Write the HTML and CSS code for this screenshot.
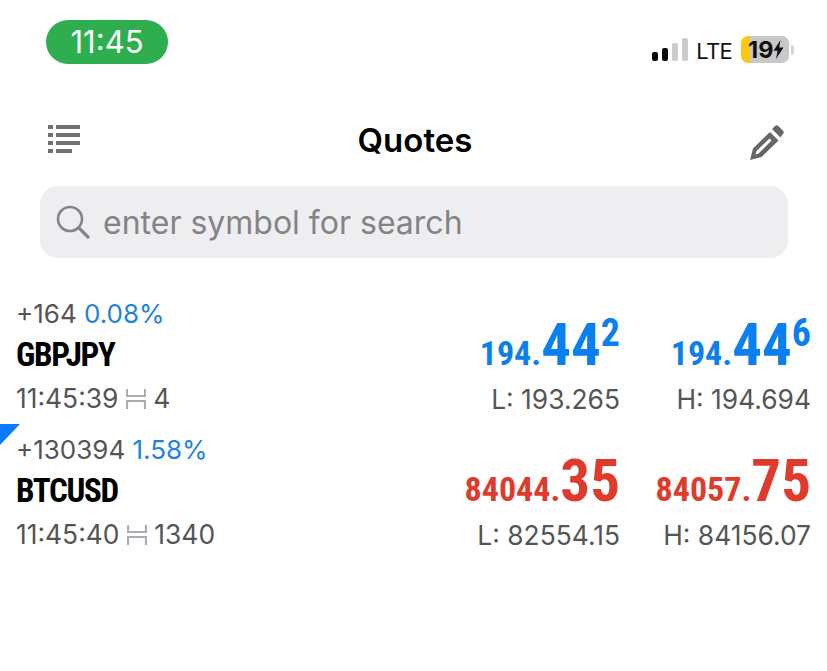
FILE: index.html
```html
<!DOCTYPE html>
<html lang="en">
<head>
  <meta charset="UTF-8" />
  <title>Quotes</title>
  <link rel="stylesheet" href="styles.css">
</head>
<body>
  <div class="status-bar">
    <div class="clock-pill">11:45</div>
    <div class="status-right">
      <div class="signal">
        <span class="bar bar-1"></span>
        <span class="bar bar-2"></span>
        <span class="bar bar-3"></span>
        <span class="bar bar-4"></span>
      </div>
      <span class="network">LTE</span>
      <div class="battery">
        <span class="battery-level">19</span>
        <svg class="bolt" width="11" height="19" viewBox="0 0 11 19"><path d="M7.5 0 0.5 10.8H4.6L3 19 10.5 7.6H6.2Z" fill="#111"/></svg>
      </div>
      <span class="battery-nub"></span>
    </div>
  </div>

  <div class="nav-bar">
    <svg class="list-icon" width="33" height="30" viewBox="0 0 33 30" fill="#707070">
      <rect x="0" y="0" width="5" height="4"/><rect x="8" y="0" width="24" height="4"/>
      <rect x="0" y="8" width="5" height="4"/><rect x="8" y="8" width="24" height="4"/>
      <rect x="0" y="16" width="5" height="4"/><rect x="8" y="16" width="24" height="4"/>
      <rect x="0" y="24" width="5" height="4"/><rect x="8" y="24" width="16" height="4"/>
    </svg>
    <div class="nav-title">Quotes</div>
    <svg class="edit-icon" width="35" height="36" viewBox="0 0 35 36" fill="#666">
      <path d="M1 35 4 23.5 21 7 29.5 15.5 12.5 32ZM7.5 26 20.5 13.5 22.5 15.5 9.5 28.5 6.5 29.5Z" fill-rule="evenodd"/>
      <path d="M23 4 25.8 1.2A2.6 2.6 0 0 1 29.5 1.2L33.8 5.4A2.6 2.6 0 0 1 33.8 9.2L31.5 12.5Z"/>
    </svg>
  </div>

  <div class="search-box">
    <svg class="search-icon" width="34" height="34" viewBox="0 0 34 34" fill="none" stroke="#858589" stroke-width="2.6">
      <circle cx="14" cy="14" r="12"/>
      <path d="M22.6 22.6 32 32" stroke-linecap="round" stroke-width="3.2"/>
    </svg>
    <span class="search-text">enter symbol for search</span>
  </div>

  <div class="quotes">
    <div class="quote-row">
      <div class="quote-info">
        <div class="change">+164 <span class="percent">0.08%</span></div>
        <div class="symbol">GBPJPY</div>
        <div class="time">11:45:39
          <svg class="spread-icon" width="20" height="20" viewBox="0 0 20 20" fill="none" stroke="#a8aeb4" stroke-width="2.2"><path d="M1 0V7H19V0M1 20V12H19V20"/></svg>
          4</div>
      </div>
      <div class="price-cell up">
        <div class="price"><span class="small">194.</span><span class="big">44</span><span class="sup">2</span></div>
        <div class="limit">L: 193.265</div>
      </div>
      <div class="price-cell up">
        <div class="price"><span class="small">194.</span><span class="big">44</span><span class="sup">6</span></div>
        <div class="limit">H: 194.694</div>
      </div>
    </div>
    <div class="quote-row">
      <span class="corner"></span>
      <div class="quote-info">
        <div class="change">+130394 <span class="percent">1.58%</span></div>
        <div class="symbol">BTCUSD</div>
        <div class="time">11:45:40
          <svg class="spread-icon" width="20" height="20" viewBox="0 0 20 20" fill="none" stroke="#a8aeb4" stroke-width="2.2"><path d="M1 0V7H19V0M1 20V12H19V20"/></svg>
          1340</div>
      </div>
      <div class="price-cell down">
        <div class="price"><span class="small">84044.</span><span class="big">35</span></div>
        <div class="limit">L: 82554.15</div>
      </div>
      <div class="price-cell down">
        <div class="price"><span class="small">84057.</span><span class="big">75</span></div>
        <div class="limit">H: 84156.07</div>
      </div>
    </div>
  </div>
</body>
</html>
```

FILE: styles.css
```css
* {
  box-sizing: border-box;
  margin: 0;
  padding: 0;
}

body {
  background: white;
  font-family: Inter, 'Noto Sans', sans-serif;
  color: #555;
}

/* Status bar */
.status-bar {
  display: flex;
  justify-content: space-between;
  align-items: flex-start;
  height: 122px;
  padding: 20px 33px 0 46px;
}

.clock-pill {
  width: 122px;
  height: 44px;
  border-radius: 22px;
  background: #2fae50;
  color: white;
  font-size: 31px;
  line-height: 44px;
  text-align: center;
}

.status-right {
  display: flex;
  align-items: center;
  margin-top: 16px;
  height: 27px;
}

.signal {
  display: flex;
  align-items: flex-end;
  gap: 3.5px;
  height: 23px;
  margin-top: -1px;
}

.bar {
  width: 6.5px;
  border-radius: 2px;
  background: #cbcbcb;
}

.bar-1 { height: 9px; background: #0a0a0a; }
.bar-2 { height: 13px; background: #0a0a0a; }
.bar-3 { height: 18px; }
.bar-4 { height: 23px; }

.network {
  margin: 3px 0 0 8px;
  font-size: 22px;
  letter-spacing: -0.7px;
  color: #111;
}

.battery {
  display: flex;
  align-items: center;
  width: 48px;
  height: 27px;
  margin-left: 9px;
  padding-left: 7px;
  border-radius: 7px;
  background: linear-gradient(to right, #fbc913 9px, #c8c8c8 9px);
}

.battery-level {
  font-size: 23.5px;
  font-weight: 700;
  color: #111;
}

.battery-nub {
  width: 3px;
  height: 10px;
  margin-left: 2px;
  border-radius: 0 3px 3px 0;
  background: #d4d4d4;
}

/* Nav bar */
.nav-bar {
  display: flex;
  justify-content: space-between;
  align-items: flex-start;
  height: 64px;
  padding: 3px 43px 0 48px;
}

.nav-title {
  margin-top: -4px;
  font-size: 33px;
  font-weight: 600;
  color: black;
  line-height: 38px;
}

/* Search */
.search-box {
  display: flex;
  align-items: center;
  gap: 13px;
  height: 72px;
  margin: 0 39px 0 40px;
  padding: 0 0 0 16px;
  border-radius: 18px;
  background: #eeeef0;
}

.search-text {
  font-size: 32px;
  color: #838388;
}

/* Quote rows */
.quotes {
  margin-top: 35px;
}

.quote-row {
  position: relative;
  display: grid;
  grid-template-columns: 1fr 192px 191px;
  height: 136px;
  padding: 0 16px;
}

.corner {
  position: absolute;
  left: 0;
  top: -5px;
  width: 0;
  height: 0;
  border-top: 21px solid #0a7aff;
  border-right: 20px solid transparent;
}

.change {
  font-size: 26px;
  line-height: 42px;
}

.time,
.limit {
  font-size: 26.4px;
  line-height: 42px;
}

.percent {
  color: #1f82e0;
}

.symbol {
  margin-top: -1px;
  margin-bottom: 1px;
  font-family: Roboto, sans-serif;
  font-stretch: 75%;
  font-size: 33px;
  font-weight: 700;
  letter-spacing: -1.3px;
  line-height: 42px;
  color: black;
}

.spread-icon {
  vertical-align: -1px;
}

.price-cell {
  text-align: right;
}

.price {
  height: 60px;
  margin-top: 22px;
  font-family: Roboto, sans-serif;
  font-stretch: 75%;
  font-weight: 700;
  line-height: 60px;
  white-space: nowrap;
}

.up .price { color: #0a7ff0; }
.down .price { color: #e03a2c; }

.small { font-size: 34px; }
.big { font-size: 59px; }
.sup { font-size: 38px; vertical-align: 19px; line-height: 0; }

.limit {
  margin-top: 3px;
}
```
